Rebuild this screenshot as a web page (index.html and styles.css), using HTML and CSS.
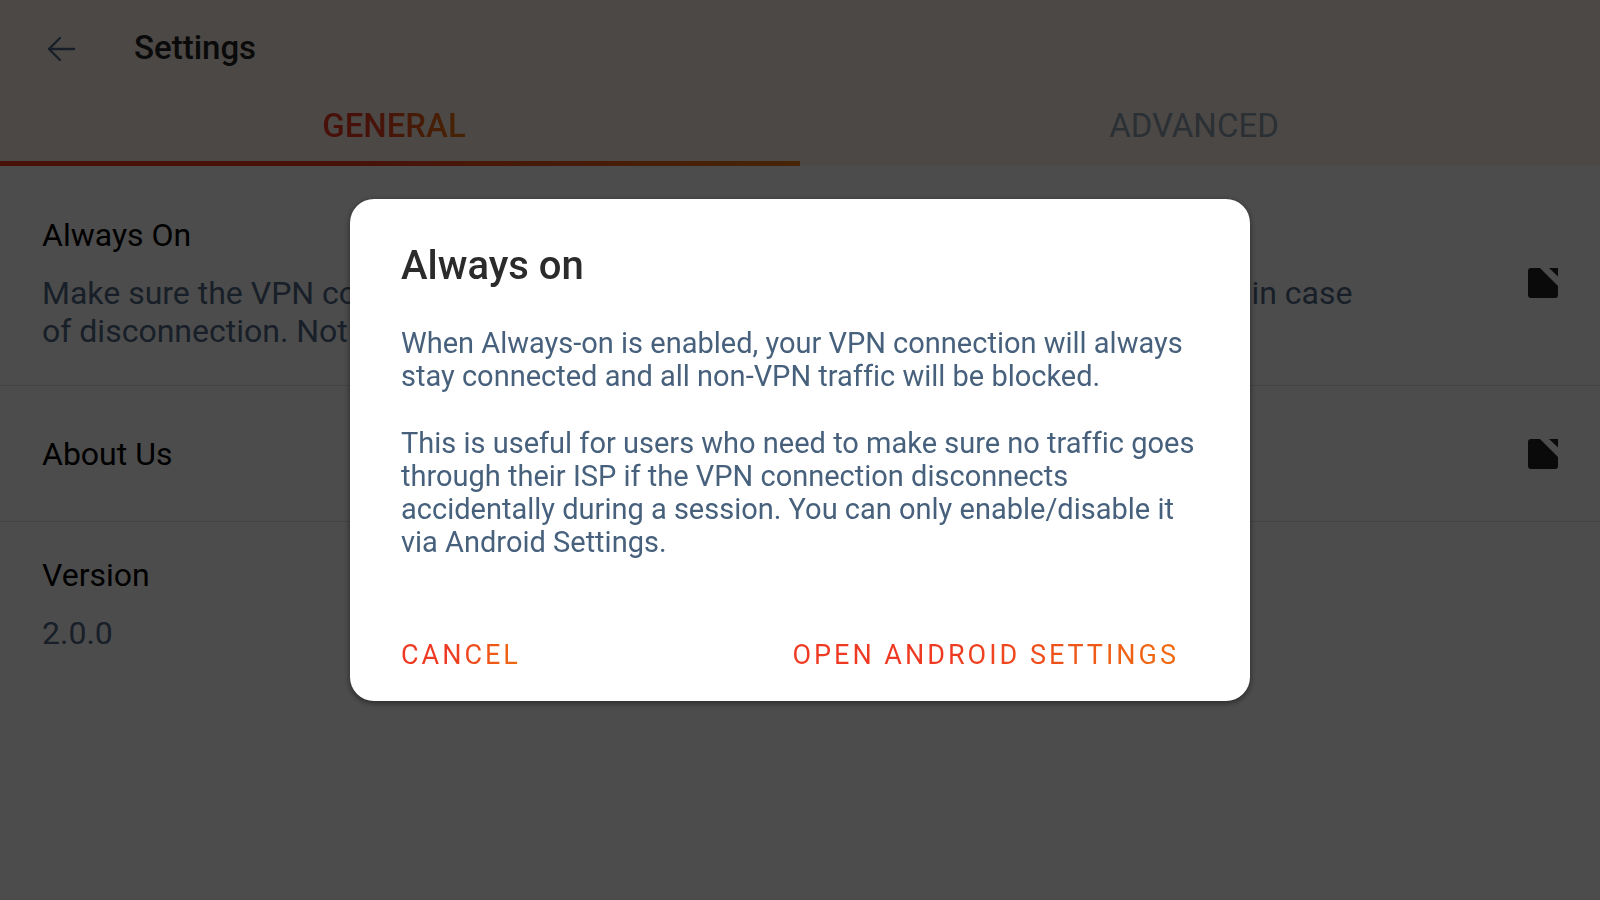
FILE: index.html
```
<!DOCTYPE html>
<html lang="en">
<head>
  <meta charset="UTF-8" />
  <meta name="viewport" content="width=device-width, initial-scale=1.0" />
  <title>Settings</title>
  <link rel="stylesheet" href="styles.css">
</head>
<body>
  <header class="header">
    <div class="topbar">
      <button class="back" aria-label="Back">
        <svg width="30" height="26" viewBox="0 0 30 26" fill="none" stroke="currentColor" stroke-width="2.4" stroke-linecap="round" stroke-linejoin="round">
          <path d="M27 13H2M13 2L2 13l11 11" />
        </svg>
      </button>
      <h1>Settings</h1>
    </div>
    <nav class="tabs">
      <button class="tab active"><span>GENERAL</span></button>
      <button class="tab"><span>ADVANCED</span></button>
    </nav>
  </header>

  <main class="list">
    <section class="row">
      <div class="row-text">
        <h2>Always On</h2>
        <p>Make sure the VPN connection is always turned on and block all other network traffic in case of disconnection. Not available on all devices.</p>
      </div>
      <button class="open" aria-label="Open Always On">
        <svg width="30" height="30" viewBox="0 0 30 30" fill="currentColor">
          <path d="M3 0h9l18 18v9a3 3 0 0 1-3 3H3a3 3 0 0 1-3-3V3a3 3 0 0 1 3-3zM21 0h9v8.500z" />
        </svg>
      </button>
    </section>
    <section class="row single">
      <div class="row-text">
        <h2>About Us</h2>
      </div>
      <button class="open" aria-label="Open About Us">
        <svg width="30" height="30" viewBox="0 0 30 30" fill="currentColor">
          <path d="M3 0h9l18 18v9a3 3 0 0 1-3 3H3a3 3 0 0 1-3-3V3a3 3 0 0 1 3-3zM21 0h9v8.500z" />
        </svg>
      </button>
    </section>
    <section class="row">
      <div class="row-text">
        <h2>Version</h2>
        <p>2.0.0</p>
      </div>
    </section>
  </main>

  <div class="scrim">
    <div class="dialog" role="dialog" aria-modal="true" aria-labelledby="dialogTitle">
      <h2 id="dialogTitle">Always on</h2>
      <p>When Always-on is enabled, your VPN connection will always stay connected and all non-VPN traffic will be blocked.</p>
      <p>This is useful for users who need to make sure no traffic goes through their ISP if the VPN connection disconnects accidentally during a session. You can only enable/disable it via Android Settings.</p>
      <div class="actions">
        <button class="action">CANCEL</button>
        <button class="action">OPEN ANDROID SETTINGS</button>
      </div>
    </div>
  </div>
</body>
</html>
```

FILE: styles.css
```
* {
  box-sizing: border-box;
}
body {
  margin: 0;
  font-family: Roboto, sans-serif;
  background-color: #fff;
  color: #000;
}
h1, h2, p {
  margin: 0;
}
button {
  font-family: inherit;
  border: none;
  background: none;
  padding: 0;
  cursor: pointer;
}
svg {
  display: block;
}

/* header */
.header {
  background-color: #fff2e8;
}
.topbar {
  display: flex;
  align-items: center;
  gap: 57px;
  height: 94px;
  padding: 0 47px;
}
.back {
  color: #516a88;
  padding-top: 4px;
}
.topbar h1 {
  font-size: 33px;
  font-weight: 500;
  color: #222;
}
.tabs {
  display: flex;
}
.tab {
  flex: 1;
  height: 72px;
  padding-right: 12px;
  padding-bottom: 4px;
  border-bottom: 5px solid transparent;
  font-size: 33px;
  color: #8fa0b2;
}
.tab.active {
  font-weight: 500;
  border-image: linear-gradient(90deg, #ee3a23 40%, #ef7a10) 1;
}
.tab.active span {
  background: linear-gradient(90deg, #ee3a23 30%, #ef7a10);
  -webkit-background-clip: text;
  background-clip: text;
  color: transparent;
}

/* settings list */
.list {
  padding-top: 16px;
}
.row {
  display: flex;
  align-items: center;
  justify-content: space-between;
  padding: 34px 42px 35px;
  border-bottom: 1px solid #dfdfdf;
}
.row:last-child {
  border-bottom: none;
}
.row.single {
  padding-top: 49px;
  padding-bottom: 48px;
}
.row-text {
  max-width: 1330px;
  font-size: 32px;
  line-height: 38px;
}
.row-text h2 {
  font-size: 32px;
  font-weight: 400;
}
.row-text p {
  margin-top: 20px;
  color: #516a88;
}
.open {
  color: #222;
}

/* dialog */
.scrim {
  position: fixed;
  inset: 0;
  display: flex;
  align-items: center;
  justify-content: center;
  background-color: rgba(0, 0, 0, 0.7);
}
.dialog {
  width: 900px;
  max-width: 90%;
  padding: 43px 51px 28px;
  border-radius: 24px;
  background-color: #fff;
  box-shadow: 0 2px 6px rgba(0, 0, 0, 0.5);
}
.dialog h2 {
  margin-bottom: 37px;
  font-size: 40px;
  line-height: 48px;
  font-weight: 500;
  color: #2b2b2b;
}
.dialog p {
  margin-bottom: 34px;
  font-size: 29px;
  line-height: 33px;
  font-variant-ligatures: none;
  color: #47617d;
}
.actions {
  display: flex;
  justify-content: space-between;
  padding-top: 44px;
  padding-right: 20px;
}
.action {
  font-size: 27px;
  line-height: 36px;
  letter-spacing: 3px;
  background: linear-gradient(90deg, #ee3a23 40%, #ef6c10);
  -webkit-background-clip: text;
  background-clip: text;
  color: transparent;
}
```
